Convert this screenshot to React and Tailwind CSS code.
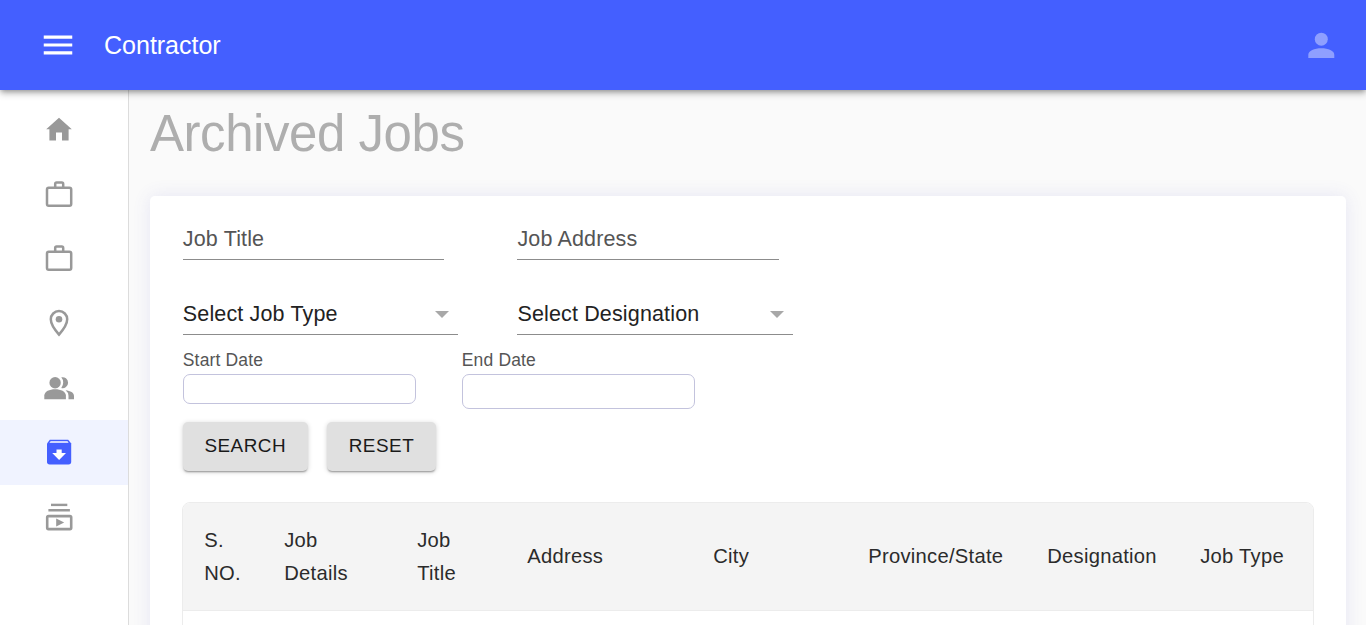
import React from "react";
import { MdMenu } from "react-icons/md";

function HomeIcon() {
  return (
    <svg viewBox="0 0 32 32" className="size-[32px] fill-current">
      <path d="M16 4.8 28.8 16.2H25.6V27.6H19V19.4H13V27.6H6.4V16.2H3.2z" />
    </svg>
  );
}

function WorkIcon() {
  return (
    <svg viewBox="0 0 32 32" className="size-[32px] fill-none stroke-current stroke-[2.5]">
      <rect x="4" y="9.8" width="24.2" height="18" rx="1.8" />
      <path d="M12.2 9.6V5.9Q12.2 4.5 13.6 4.5H18.8Q20.2 4.5 20.2 5.9V9.6" />
    </svg>
  );
}

function PlaceIcon() {
  return (
    <svg viewBox="0 0 32 32" className="size-[32px]">
      <path
        d="M16 4.1a8.2 8.2 0 0 0-8.2 8.2C7.8 18.3 16 27.6 16 27.6s8.2-9.3 8.2-15.3A8.2 8.2 0 0 0 16 4.1z"
        className="fill-none stroke-current stroke-[2.5]"
      />
      <circle cx="16" cy="12.3" r="3.3" className="fill-current" />
    </svg>
  );
}

function PeopleIcon() {
  return (
    <svg viewBox="0 0 32 32" className="size-[32px] fill-current">
      <circle cx="12.1" cy="10.7" r="5.7" />
      <path d="M1.3 27.3V23.6C1.3 19.4 6.5 17.2 12.1 17.2S22.9 19.4 22.9 23.6V27.3z" />
      <path d="M18.3 5.3A5.5 5.5 0 1 1 18.3 16Q20.2 13.7 20.2 10.6T18.3 5.3z" />
      <path d="M22.6 18.2C27.4 18.7 31 20.6 31 24V27.3H25.5V23.8Q25.5 20.4 22.6 18.2z" />
    </svg>
  );
}

function ArchiveIcon() {
  return (
    <svg viewBox="0 0 32 32" className="size-[32px]">
      <path
        d="M6.8 3.8H25.2L28.2 7.4V25.8Q28.2 28.5 25.5 28.5H6.7Q4 28.5 4 25.8V7.4z"
        className="fill-current"
      />
      <path d="M7.6 5.3H24.5L25.7 6.7H6.4z" className="fill-white" />
      <path d="M13.5 13.4H18.7V17H23L16.1 24 9.2 17H13.5z" className="fill-white" />
    </svg>
  );
}

function VideosIcon() {
  return (
    <svg viewBox="0 0 32 32" className="size-[32px] fill-current">
      <rect x="8" y="2.7" width="16.3" height="2.4" />
      <rect x="5.4" y="8" width="21.5" height="2.5" />
      <rect
        x="4.2"
        y="15.1"
        width="24"
        height="13"
        rx="1.3"
        className="fill-none stroke-current stroke-[2.6]"
      />
      <path d="M13.2 17.5V25.6L21.2 21.5z" />
    </svg>
  );
}

function PersonIcon() {
  return (
    <svg viewBox="0 0 38 38" className="size-[38px] fill-current">
      <circle cx="19.3" cy="13.2" r="6.5" />
      <path d="M6.3 32V28.8C6.3 24.6 12.4 22.2 19.3 22.2S32.3 24.6 32.3 28.8V32z" />
    </svg>
  );
}

const NAV = [
  { id: "home", Icon: HomeIcon },
  { id: "jobs", Icon: WorkIcon },
  { id: "active-jobs", Icon: WorkIcon },
  { id: "locations", Icon: PlaceIcon },
  { id: "people", Icon: PeopleIcon },
  { id: "archived", Icon: ArchiveIcon, active: true },
  { id: "videos", Icon: VideosIcon },
];

const COLUMNS = [
  "S. NO.",
  "Job Details",
  "Job Title",
  "Address",
  "City",
  "Province/State",
  "Designation",
  "Job Type",
];

function Header() {
  return (
    <header className="relative z-10 flex h-[90px] shrink-0 items-center bg-[#445fff] pr-[26px] pl-[39px] shadow-[0_2px_5px_-1px_rgba(0,0,0,0.3),0_4px_7px_rgba(0,0,0,0.2)]">
      <button type="button" className="text-white">
        <MdMenu className="size-[38px]" />
      </button>
      <h1 className="ml-[27px] flex-1 pt-[2px] text-[25.1px] tracking-[-0.05px] text-white">Contractor</h1>
      <div className="text-[#8f9fff]">
        <PersonIcon />
      </div>
    </header>
  );
}

function Sidebar() {
  return (
    <nav className="flex w-[129px] shrink-0 flex-col border-r border-[#dcdcdc] bg-white pt-[7px]">
      {NAV.map(({ id, Icon, active }) => (
        <a
          key={id}
          className={
            active
              ? "flex h-[64.6px] shrink-0 items-center bg-[#f0f3ff] pl-[43px] text-[#445fff]"
              : "flex h-[64.6px] shrink-0 items-center pl-[43px] text-[#999999]"
          }
        >
          <Icon />
        </a>
      ))}
    </nav>
  );
}

function TextField({ label }) {
  return (
    <div className="flex h-[41px] w-[261.5px] items-start border-b border-[#8c8c8c] text-[21.5px] leading-[40px] tracking-[0.15px] text-[#555555]">
      {label}
    </div>
  );
}

function SelectField({ label }) {
  return (
    <div className="flex h-[41px] w-[275.5px] items-start justify-between border-b border-[#8c8c8c] text-[21.5px] leading-[40px] tracking-[0.15px] text-[#222222]">
      {label}
      <svg viewBox="0 0 14 7" className="mt-[17px] mr-[9px] h-[7px] w-[14px] fill-[#a8a8a8]">
        <path d="M0 0h14L7 7z" />
      </svg>
    </div>
  );
}

function DateField({ label, tall }) {
  return (
    <div className="w-[233px]">
      <div className="h-[27px] text-[17.5px] leading-[26px] tracking-[0.15px] text-[#555555]">{label}</div>
      <div
        className={
          tall
            ? "h-[35px] rounded-[7px] border border-[#c3c3dd] bg-white"
            : "h-[30px] rounded-[7px] border border-[#c3c3dd] bg-white"
        }
      />
    </div>
  );
}

function Button({ children }) {
  return (
    <button
      type="button"
      className="h-[49px] rounded-[5px] bg-[#e0e0e0] px-[21.6px] text-[18.9px] tracking-[0.5px] text-[#1a1a1a] shadow-[0_2px_2px_-1px_rgba(0,0,0,0.35),0_1px_5px_rgba(0,0,0,0.18)]"
    >
      {children}
    </button>
  );
}

function JobsTable() {
  return (
    <div className="mt-[31px] h-[200px] overflow-hidden rounded-t-[8px] border border-[#ececec] bg-white">
      <div className="grid h-[108px] grid-cols-[80px_133px_110px_186px_155px_179px_153px_1fr] items-center border-b border-[#ececec] bg-[#f4f4f4]">
        {COLUMNS.map((name) => (
          <div
            key={name}
            className="pr-[20px] pl-[21.2px] text-[20.2px] leading-[32.3px] tracking-[0.27px] text-[#2b2b2b] [&:nth-child(2)]:pr-[40px]"
          >
            {name}
          </div>
        ))}
      </div>
    </div>
  );
}

export default function App() {
  return (
    <div className="flex h-[625px] w-[1366px] flex-col overflow-hidden bg-[#fafafa] font-['Liberation_Sans',Arial,sans-serif]">
      <Header />
      <div className="flex min-h-0 flex-1">
        <Sidebar />
        <main className="flex min-w-0 flex-1 flex-col pr-[20px] pl-[21px]">
          <h2 className="h-[106px] shrink-0 pt-[15px] text-[51px] leading-[58px] tracking-[-0.45px] text-[#aeaeae]">
            Archived Jobs
          </h2>
          <section className="h-[520px] shrink-0 rounded-t-[5px] bg-white px-[32px] pt-[23px] shadow-[0_0_18px_rgba(80,80,200,0.12)]">
            <div className="pl-[0.8px]">
              <div className="grid grid-cols-[334.6px_276px] gap-y-[34px]">
                <TextField label="Job Title" />
                <TextField label="Job Address" />
                <SelectField label="Select Job Type" />
                <SelectField label="Select Designation" />
              </div>
              <div className="mt-[12px] flex items-start gap-[46px]">
                <DateField label="Start Date" />
                <DateField label="End Date" tall />
              </div>
              <div className="mt-[13px] flex gap-[19.4px]">
                <Button>SEARCH</Button>
                <Button>RESET</Button>
              </div>
            </div>
            <JobsTable />
          </section>
        </main>
      </div>
    </div>
  );
}
